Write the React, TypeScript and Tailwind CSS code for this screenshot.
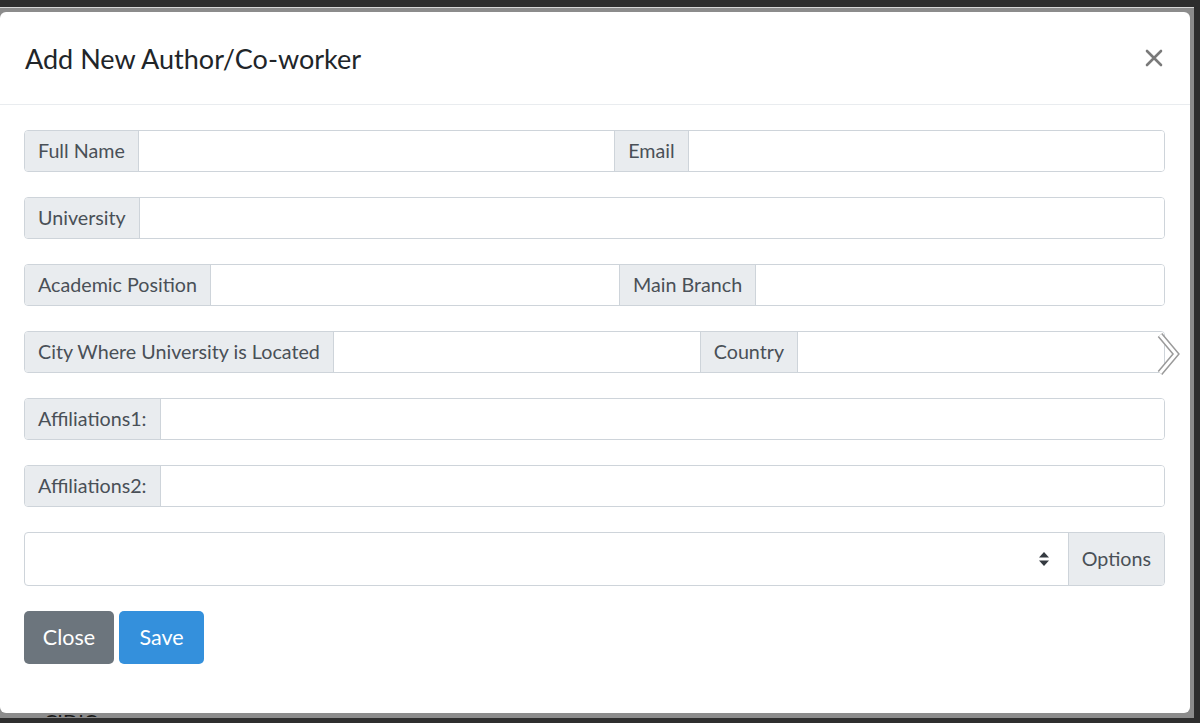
import React from 'react';

const font = { fontFamily: 'Lato, "Open Sans", sans-serif' };

function Label({ children }: { children: React.ReactNode }) {
  return (
    <span className="flex items-center bg-[#e9ecef] px-[13px] text-[19.7px] text-[#495057] border-r border-[#ced4da] whitespace-nowrap">
      {children}
    </span>
  );
}

function Field({ last }: { last?: boolean }) {
  return (
    <input
      type="text"
      className={`flex-1 min-w-0 bg-white outline-none ${last ? '' : 'border-r border-[#ced4da]'}`}
    />
  );
}

function Group({ items }: { items: string[] }) {
  return (
    <div className="flex h-[42px] rounded-[4px] border border-[#ced4da] overflow-hidden">
      {items.map((label, i) => (
        <React.Fragment key={label}>
          <Label>{label}</Label>
          <Field last={i === items.length - 1} />
        </React.Fragment>
      ))}
    </div>
  );
}

function SortArrows() {
  return (
    <svg width="12" height="16" viewBox="0 0 12 16" className="text-[#343a40]">
      <path d="M6 1 L11 6.5 H1 Z" fill="currentColor" />
      <path d="M6 15 L11 9.5 H1 Z" fill="currentColor" />
    </svg>
  );
}

export default function App() {
  return (
    <div className="w-[1200px] h-[723px] bg-[#2e2e2e] overflow-hidden flex flex-col" style={font}>
      <div className="h-[7px] shrink-0" />
      <div className="flex shrink-0">
        <div className="w-[1194px] h-[711px] bg-[#8c8c8c] border-t border-[#d8d8d8] pt-[4px] relative">
          <div className="w-[1190px] h-[701px] bg-white rounded-[6px] flex flex-col">
            {/* header */}
            <div className="h-[93px] shrink-0 flex items-center justify-between pl-[25px] pr-[27px] border-b border-[#e9ecef]">
              <h5 className="text-[27px] text-[#212529] leading-none">Add New Author/Co-worker</h5>
              <svg width="18" height="18" viewBox="0 0 18 18">
                <path d="M2 2 L16 16 M16 2 L2 16" stroke="#7a7a7a" strokeWidth="2.6" strokeLinecap="round" />
              </svg>
            </div>

            {/* body */}
            <div className="flex flex-col gap-[25px] pl-[24px] pr-[25px] pt-[25px]">
              <Group items={['Full Name', 'Email']} />
              <Group items={['University']} />
              <Group items={['Academic Position', 'Main Branch']} />
              <Group items={['City Where University is Located', 'Country']} />
              <Group items={['Affiliations1:']} />
              <Group items={['Affiliations2:']} />
              <div className="flex h-[54px] rounded-[4px] border border-[#ced4da] overflow-hidden">
                <div className="flex-1 flex items-center justify-end pr-[18px] border-r border-[#ced4da]">
                  <SortArrows />
                </div>
                <span className="flex items-center bg-[#e9ecef] px-[13px] text-[19.7px] text-[#495057]">Options</span>
              </div>
              <div className="flex gap-[5px]">
                <button className="h-[53px] w-[90px] rounded-[5px] bg-[#6c757d] text-white text-[21.5px]">Close</button>
                <button className="h-[53px] w-[85px] rounded-[5px] bg-[#3490dc] text-white text-[21.5px]">Save</button>
              </div>
            </div>
          </div>

          {/* carousel arrow peeking through */}
          <svg
            width="26"
            height="44"
            viewBox="0 0 26 44"
            className="absolute left-[1155px] top-[324px]"
          >
            <path d="M5 3 L21 22 L5 41" fill="none" stroke="#9a9a9a" strokeWidth="6" strokeLinejoin="miter" />
            <path d="M5 3 L21 22 L5 41" fill="none" stroke="#ffffff" strokeWidth="3" strokeLinejoin="miter" />
          </svg>

          <div className="absolute left-[44px] top-[703px] h-[6px] overflow-hidden">
            <span className="block text-[20px] leading-[20px] text-[#1a1a1a]">CIDIC</span>
          </div>
        </div>
      </div>
    </div>
  );
}
